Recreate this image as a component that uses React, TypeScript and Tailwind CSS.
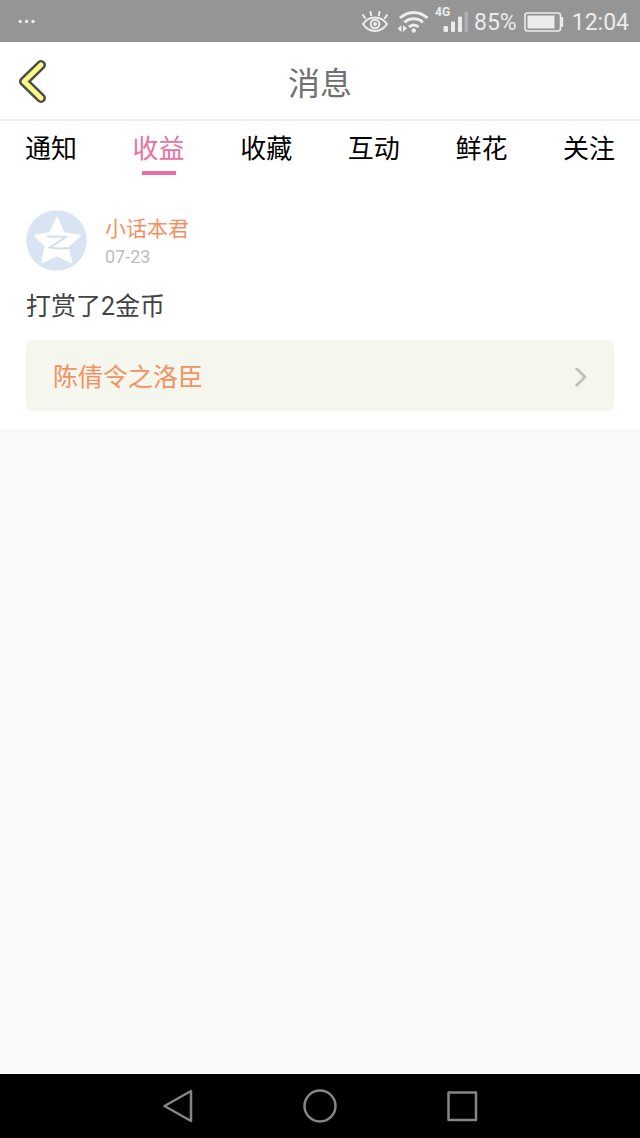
const tabs = ['通知', '收益', '收藏', '互动', '鲜花', '关注'];

const messages = [
  {
    user: '小话本君',
    date: '07-23',
    text: '打赏了2金币',
    book: '陈倩令之洛臣',
  },
];

function StatusBar() {
  return (
    <div className="flex h-[42px] items-center justify-between bg-[#959595] pt-0.5 pr-[11px] pl-[18px] text-[#ececec]">
      <svg className="h-2 w-[18px]" viewBox="0 0 18 8" fill="currentColor">
        <circle cx="2.2" cy="3.5" r="1.7" />
        <circle cx="8.6" cy="3.5" r="1.7" />
        <circle cx="15" cy="3.5" r="1.7" />
      </svg>
      <div className="flex items-center">
        {/* eye comfort mode */}
        <svg className="mr-2 h-6 w-7" viewBox="0 0 28 24" fill="none" stroke="currentColor" strokeWidth="2" strokeLinecap="round">
          <path d="M1 14C4 9.500 8.500 7.500 13 7.500s9 2 12 6.500c-3 4.800-7 7-12 7s-9-2.200-12-7z" />
          <circle cx="13" cy="14" r="4.3" />
          <circle cx="13" cy="14" r="1" />
          <path d="M1 5l2 3M8.500 2l.7 3.200M17.500 2l-.7 3.200M25 5l-2 3" />
        </svg>
        {/* wifi with data arrows */}
        <svg className="mr-1.5 h-6 w-8" viewBox="0 0 32 24" fill="none" stroke="currentColor" strokeWidth="3">
          <path d="M2 8c8-7.500 19.500-7.500 27.500 0" />
          <path d="M6.500 12.500c5.200-5 13.300-5 18.500 0" />
          <path d="M11 17c2.800-2.800 6.700-2.800 9.500 0" />
          <circle cx="15.7" cy="20.5" r="2.2" fill="currentColor" stroke="none" />
          <path d="M-.5 18.500l4-3.500v7zM9 18.500l-4-3.500v7z" fill="currentColor" stroke="none" />
        </svg>
        {/* mobile signal */}
        <div className="relative mr-1.5 h-8 w-8">
          <span className="absolute top-0 -left-px text-[12px] leading-3 font-bold">4G</span>
          <svg className="h-8 w-8" viewBox="0 0 32 32" fill="currentColor">
            <rect x="7.5" y="20" width="4.5" height="6" rx="1" />
            <rect x="15" y="15.5" width="4" height="10.5" rx="1" />
            <rect x="22" y="10.5" width="4" height="15.5" rx="1" />
            <rect x="28.5" y="5.5" width="3.5" height="20.5" rx="1" opacity=".3" />
          </svg>
        </div>
        <span className="pt-0.5 text-[23px] leading-7">85%</span>
        <svg className="mr-2 ml-[7px] h-5 w-10" viewBox="0 0 40 20" fill="none">
          <rect x="1" y="1" width="35.5" height="18" rx="2.5" stroke="currentColor" strokeWidth="1.6" />
          <rect x="3.5" y="3.5" width="27" height="13" fill="currentColor" />
          <path d="M37 5h1a1.200 1.200 0 0 1 1.200 1.200v7.600A1.200 1.200 0 0 1 38 15h-1z" fill="currentColor" />
        </svg>
        <span className="pt-0.5 text-[23px] leading-7">12:04</span>
      </div>
    </div>
  );
}

function Avatar() {
  return (
    <svg className="h-[61px] w-[61px]" viewBox="0 0 61 61">
      <circle cx="30.5" cy="30.5" r="30.3" fill="#d8e4f2" />
      <path
        d="M31 7.500l7 15.500 16.500 2.500-12.500 11 3.500 16-14.500-7-15 7 3.500-16.500-11-10.500L24 23z"
        fill="#fff"
        stroke="#fff"
        strokeWidth="1.5"
        strokeLinejoin="round"
      />
      <path
        d="M21 26.800q9-.8 19 .2L24 37.500q8 1.500 22 .5"
        fill="none"
        stroke="#cfdeef"
        strokeWidth="2"
      />
    </svg>
  );
}

export default function App() {
  return (
    <div className="flex min-h-screen flex-col bg-[#faf8f9] font-[Roboto,'Noto_Sans_CJK_SC',sans-serif]">
      <StatusBar />

      <header className="grid h-[79px] grid-cols-[1fr_auto_1fr] items-center border-b-2 border-[#efefef] bg-white px-[18px]">
        <button type="button" aria-label="返回" className="w-8">
          <svg className="h-11 w-7" viewBox="0 0 28 44" fill="none" strokeLinecap="round" strokeLinejoin="round">
            <path d="M23 6L6 22.500 23 39" stroke="#4c4c4a" strokeWidth="10" />
            <path d="M23 6L6 22.500 23 39" stroke="#fdfa86" strokeWidth="5" />
          </svg>
        </button>
        <h1 className="pt-1.5 text-[32px] leading-10 text-[#707070]">消息</h1>
      </header>

      <main className="bg-white pb-[18px]">
        <nav className="flex justify-between px-[25px] pt-2">
          {tabs.map((tab) => (
            <a
              key={tab}
              href="#"
              className={
                tab === '收益'
                  ? 'flex flex-col items-center text-[26px] leading-10 text-[#ee6fa2]'
                  : 'flex flex-col items-center text-[26px] leading-10 text-black'
              }
            >
              {tab}
              {tab === '收益' && <span className="mt-0.5 h-1 w-[34px] bg-[#ea6da0]" />}
            </a>
          ))}
        </nav>

        {messages.map((msg, idx) => (
          <article key={idx} className="px-[26px] pt-[35px]">
            <div className="flex items-center gap-[18px]">
              <Avatar />
              <div>
                <h2 className="text-[21px] leading-8 text-[#f4905f]">{msg.user}</h2>
                <p className="text-[18px] leading-6 text-[#bdbdbd]">{msg.date}</p>
              </div>
            </div>
            <p className="mt-4 text-[25px] leading-10 text-[#444]">{msg.text}</p>
            <a href="#" className="mt-[13px] flex h-[71px] items-center justify-between rounded-md bg-[#f5f6ee] px-[27px] pt-1 text-[25px] leading-10 text-[#f2935f]">
              {msg.book}
              <svg className="h-5 w-3" viewBox="0 0 12 20" fill="none" stroke="#bfc0ba" strokeWidth="2.8">
                <path d="M1 0l9 9-9 9" />
              </svg>
            </a>
          </article>
        ))}
      </main>

      <footer className="mt-auto grid h-[65px] grid-cols-[1fr_142px_142px_142px_1fr] items-center justify-items-center border-t border-white bg-black text-[#858585]">
        <button type="button" aria-label="后退" className="col-start-2">
          <svg className="h-9 w-9" viewBox="0 0 36 36" fill="none" stroke="currentColor" strokeWidth="2.5" strokeLinejoin="round">
            <path d="M31 3v30L4.500 18z" />
          </svg>
        </button>
        <button type="button" aria-label="主页">
          <svg className="h-9 w-9" viewBox="0 0 36 36" fill="none" stroke="currentColor" strokeWidth="2.5">
            <circle cx="18" cy="18" r="15.5" />
          </svg>
        </button>
        <button type="button" aria-label="最近任务">
          <svg className="h-9 w-9" viewBox="0 0 36 36" fill="none" stroke="currentColor" strokeWidth="2.5" strokeLinejoin="round">
            <rect x="4.5" y="4.5" width="27.5" height="27.5" />
          </svg>
        </button>
      </footer>
    </div>
  );
}
